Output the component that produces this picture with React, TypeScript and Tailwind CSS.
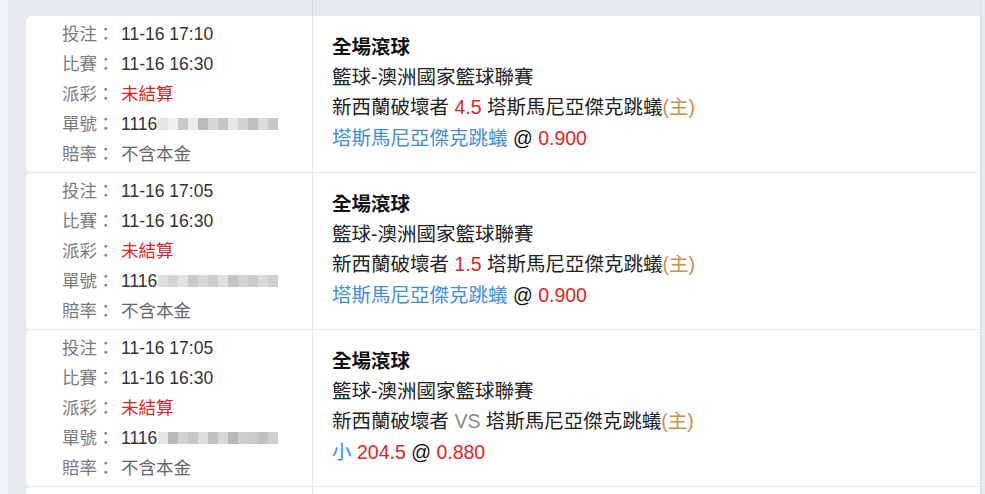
import React from "react";

type Bet = {
  placed: string;
  match: string;
  blur: string[];
  handicap: React.ReactNode;
  pick: React.ReactNode;
};

const font = { fontFamily: '"Liberation Sans", "Noto Sans CJK TC", sans-serif' };

const bets: Bet[] = [
  {
    placed: "11-16 17:10",
    match: "11-16 16:30",
    blur: ["#e4e4e4", "#f0f0f0", "#c9c9c9", "#ececec", "#b9bcbf", "#d6d6d6", "#c2c4c6", "#e6e6e6", "#cfd0d2", "#bdbfc1", "#dcdcdc", "#c6c7c9"],
    handicap: <span className="text-[#e3231f]">4.5</span>,
    pick: (
      <>
        <span className="text-[#3f8ddb]">塔斯馬尼亞傑克跳蟻</span> <span className="text-[#111]">@</span>{" "}
        <span className="text-[#e3231f]">0.900</span>
      </>
    ),
  },
  {
    placed: "11-16 17:05",
    match: "11-16 16:30",
    blur: ["#dedede", "#d4d4d4", "#e2e2e2", "#c8c9cb", "#d8d8d8", "#cdcdcd", "#e0e0e0", "#c4c5c7", "#d2d2d2", "#c9cacc", "#dadada", "#cfcfcf"],
    handicap: <span className="text-[#e3231f]">1.5</span>,
    pick: (
      <>
        <span className="text-[#3f8ddb]">塔斯馬尼亞傑克跳蟻</span> <span className="text-[#111]">@</span>{" "}
        <span className="text-[#e3231f]">0.900</span>
      </>
    ),
  },
  {
    placed: "11-16 17:05",
    match: "11-16 16:30",
    blur: ["#e6e6e6", "#b8babc", "#d2d2d2", "#c5c6c8", "#dcdcdc", "#c0c1c3", "#d6d6d6", "#b6b8ba", "#cfcfcf", "#c8c9cb", "#bfc0c2", "#d0d0d0"],
    handicap: <span className="text-[#8a8a8a]">VS</span>,
    pick: (
      <>
        <span className="text-[#3f8ddb]">小</span> <span className="text-[#e3231f]">204.5</span>{" "}
        <span className="text-[#111]">@</span> <span className="text-[#e3231f]">0.880</span>
      </>
    ),
  },
];

function Line({ label, children }: { label: string; children: React.ReactNode }) {
  return (
    <div className="flex h-[30px] items-center">
      <span className="w-[59px] shrink-0 text-[#7a7a7a]">{label}：</span>
      {children}
    </div>
  );
}

function BetRow({ bet }: { bet: Bet }) {
  return (
    <div className="flex h-[157px] shrink-0 rounded-l-[5px] border-b border-[#e8eaed] bg-white">
      <div className="w-[287px] shrink-0 border-r border-[#e6e6e6] py-[3px] pl-[36px] text-[17.5px]">
        <Line label="投注">
          <span className="text-[#333]">{bet.placed}</span>
        </Line>
        <Line label="比賽">
          <span className="text-[#333]">{bet.match}</span>
        </Line>
        <Line label="派彩">
          <span className="text-[#e3231f]">未結算</span>
        </Line>
        <Line label="單號">
          <span className="text-[#333]">1116</span>
          <div className="ml-[1px] flex h-[12px] w-[120px]">
            {bet.blur.map((c, i) => (
              <div key={i} className="h-full flex-1" style={{ backgroundColor: c }} />
            ))}
          </div>
        </Line>
        <Line label="賠率">
          <span className="text-[#666]">不含本金</span>
        </Line>
      </div>
      <div className="flex-1 pl-[19px] pt-[16px] text-[19.5px] leading-[30px] text-[#222]">
        <div className="font-bold text-[#111]">全場滾球</div>
        <div>籃球-澳洲國家籃球聯賽</div>
        <div>
          新西蘭破壞者 {bet.handicap} 塔斯馬尼亞傑克跳蟻<span className="text-[#c9914a]">(主)</span>
        </div>
        <div className="mt-[1px]">{bet.pick}</div>
      </div>
    </div>
  );
}

export default function App() {
  return (
    <div className="flex h-[494px] w-[985px] overflow-hidden bg-[#f1f3f6]" style={font}>
      <div className="ml-[8px] flex h-full w-[977px] bg-[#e6e9ee] pl-[18px]">
        <div className="flex w-[955px] flex-col border-r border-[#d8dce2]">
          {/* header strip */}
          <div className="flex h-[16px] shrink-0">
            <div className="w-[287px] border-r border-[#d6dae0]" />
            <div className="flex-1" />
          </div>
          {bets.map((b, i) => (
            <BetRow key={i} bet={b} />
          ))}
          {/* next row, only its top edge is in view */}
          <div className="flex h-[40px] shrink-0 rounded-l-[5px] bg-white">
            <div className="w-[287px] shrink-0 border-r border-[#e6e6e6]" />
            <div className="flex-1" />
          </div>
        </div>
      </div>
    </div>
  );
}
